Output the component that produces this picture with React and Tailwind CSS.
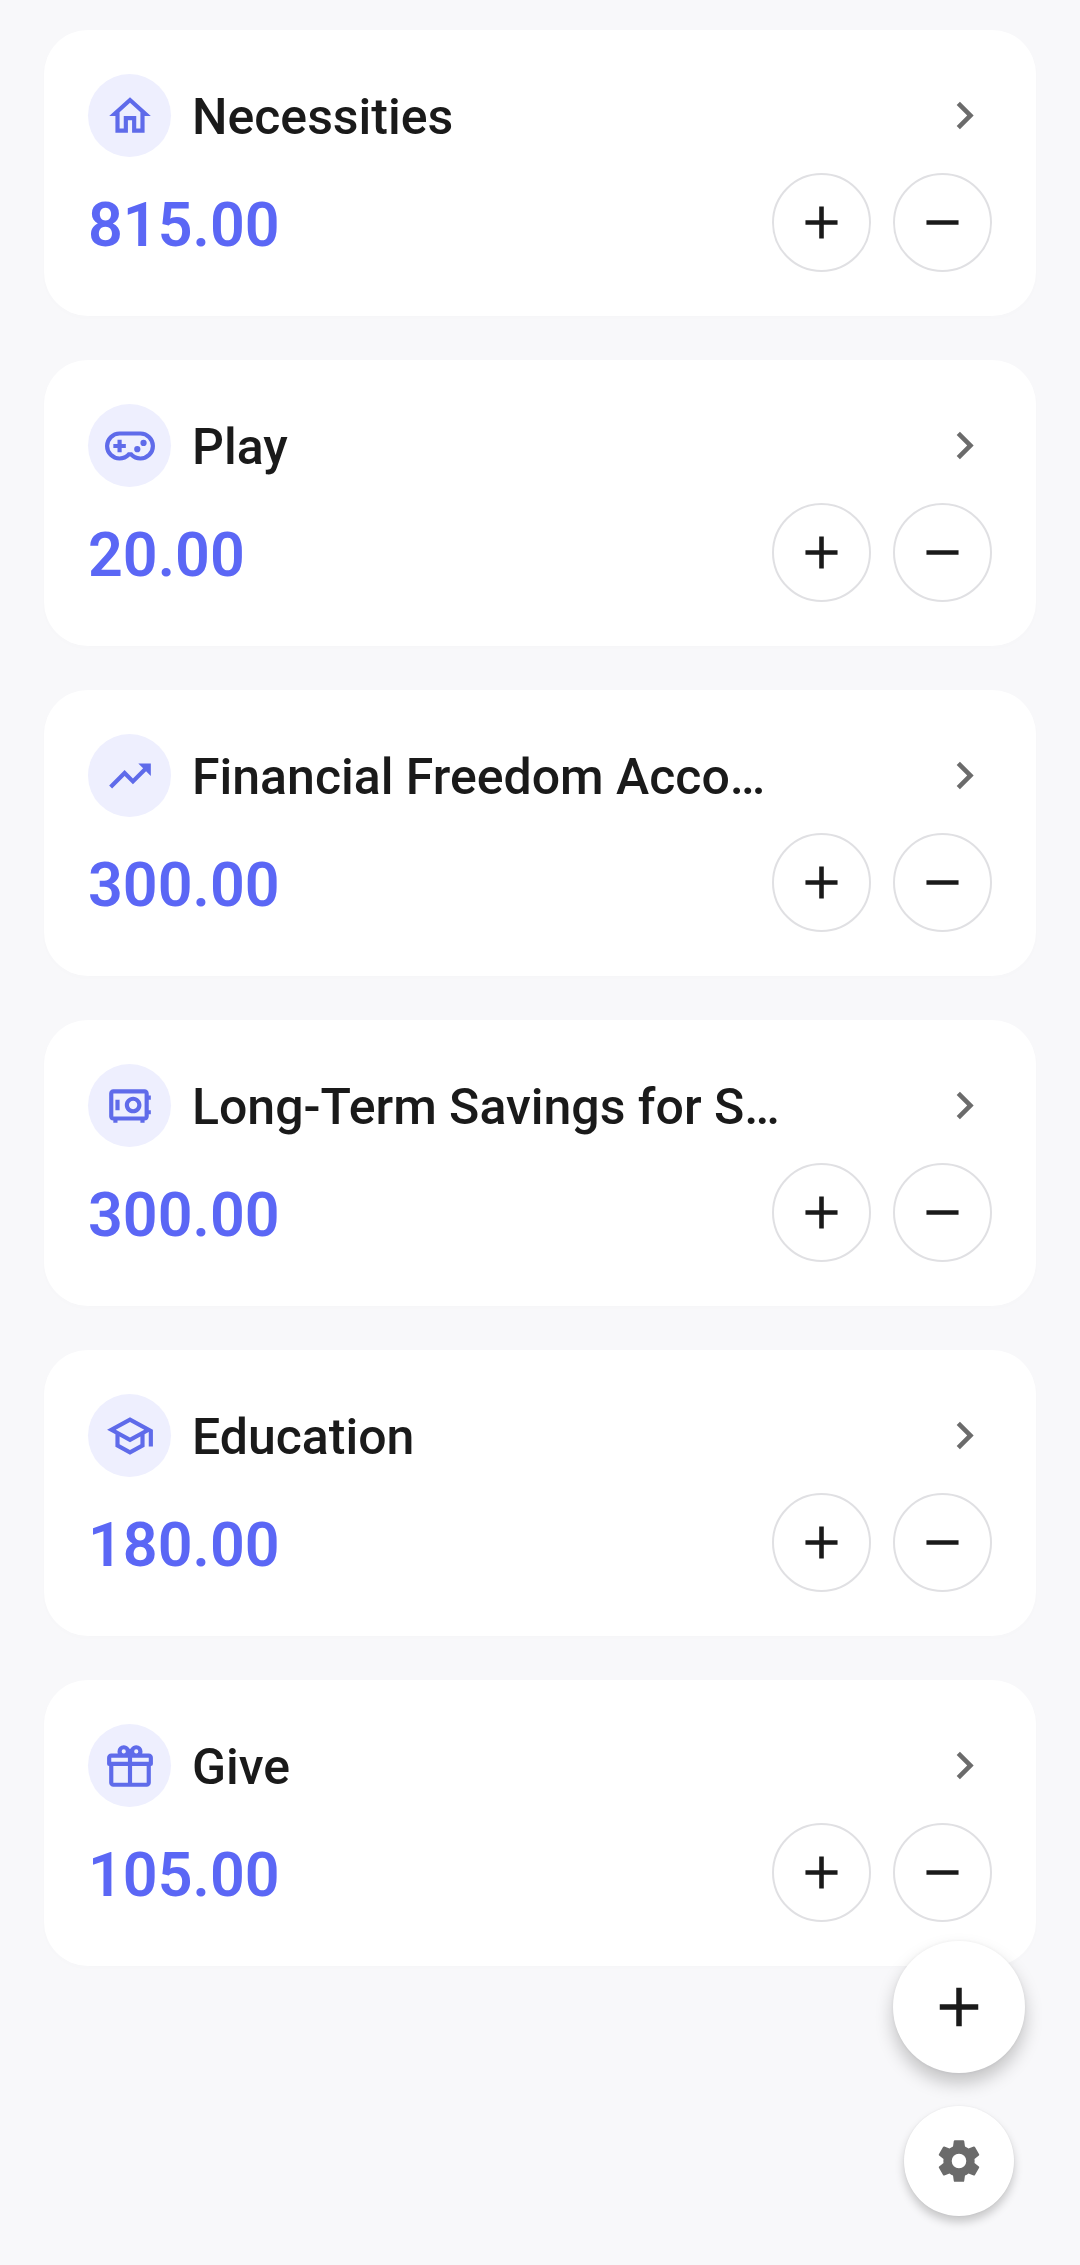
import { useState } from "react";

// 24x24 icon outlines
const icons = {
  home: "M12 5.69L17 10.19V18H15V12H9V18H7V10.19L12 5.69M12 3L2 12H5V20H11V14H13V20H19V12H22",
  controller:
    "M6,9H8V11H10V13H8V15H6V13H4V11H6V9M18.5,9A1.5,1.5 0 0,1 20,10.5A1.5,1.5 0 0,1 18.5,12A1.5,1.5 0 0,1 17,10.5A1.5,1.5 0 0,1 18.5,9M15.5,12A1.5,1.5 0 0,1 17,13.5A1.5,1.5 0 0,1 15.5,15A1.5,1.5 0 0,1 14,13.5A1.5,1.5 0 0,1 15.5,12M17,5A7,7 0 0,1 24,12A7,7 0 0,1 17,19C15.04,19 13.27,18.2 12,16.9C10.73,18.2 8.96,19 7,19A7,7 0 0,1 0,12A7,7 0 0,1 7,5H17M7,7A5,5 0 0,0 2,12A5,5 0 0,0 7,17C8.64,17 10.09,16.21 11,15H13C13.91,16.21 15.36,17 17,17A5,5 0 0,0 22,12A5,5 0 0,0 17,7H7Z",
  trending:
    "M16,6L18.29,8.29L13.41,13.17L9.41,9.17L2,16.59L3.41,18L9.41,12L13.41,16L19.71,9.71L22,12V6H16Z",
  safe: "M19 4H4C2.9 4 2 4.9 2 6V17C2 18.1 2.9 19 4 19V20H6V19H17V20H19V19C20.1 19 21 18.1 21 17V16H22V14H21V9H22V7H21V6C21 4.9 20.1 4 19 4M19 17H4V6H19V17M13.5 7.5C11.29 7.5 9.5 9.29 9.5 11.5S11.29 15.5 13.5 15.5 17.5 13.71 17.5 11.5 15.71 7.5 13.5 7.5M13.5 13.5C12.4 13.5 11.5 12.6 11.5 11.5S12.4 9.5 13.5 9.5 15.5 10.4 15.5 11.5 14.6 13.5 13.5 13.5M5 9H7V14H5V9Z",
  school:
    "M12 3L1 9L5 11.18V17.18L12 21L19 17.18V11.18L21 10.09V17H23V9L12 3M18.82 9L12 12.72L5.18 9L12 5.28L18.82 9M17 16L12 18.72L7 16V12.27L12 15L17 12.27V16Z",
  gift: "M22,12V20A2,2 0 0,1 20,22H4A2,2 0 0,1 2,20V12A1,1 0 0,1 1,11V8A2,2 0 0,1 3,6H6.17C6.06,5.69 6,5.35 6,5A3,3 0 0,1 9,2C10,2 10.88,2.5 11.43,3.24V3.23L12,4L12.57,3.23V3.24C13.12,2.5 14,2 15,2A3,3 0 0,1 18,5C18,5.35 17.94,5.69 17.83,6H21A2,2 0 0,1 23,8V11A1,1 0 0,1 22,12M4,20H11V12H4V20M20,20V12H13V20H20M9,4A1,1 0 0,0 8,5A1,1 0 0,0 9,6A1,1 0 0,0 10,5A1,1 0 0,0 9,4M15,4A1,1 0 0,0 14,5A1,1 0 0,0 15,6A1,1 0 0,0 16,5A1,1 0 0,0 15,4M3,8V10H11V8H3M13,8V10H21V8H13Z",
  chevron: "M8.59,16.58L13.17,12L8.59,7.41L10,6L16,12L10,18L8.59,16.58Z",
  plus: "M19,13H13V19H11V13H5V11H11V5H13V11H19V13Z",
  minus: "M19,13H5V11H19V13Z",
  cog: "M12,15.5A3.5,3.5 0 0,1 8.5,12A3.5,3.5 0 0,1 12,8.5A3.5,3.5 0 0,1 15.5,12A3.5,3.5 0 0,1 12,15.5M19.43,12.97C19.47,12.65 19.5,12.33 19.5,12C19.5,11.67 19.47,11.34 19.43,11L21.54,9.37C21.73,9.22 21.78,8.95 21.66,8.73L19.66,5.27C19.54,5.05 19.27,4.96 19.05,5.05L16.56,6.05C16.04,5.66 15.5,5.32 14.87,5.07L14.5,2.42C14.46,2.18 14.25,2 14,2H10C9.75,2 9.54,2.18 9.5,2.42L9.13,5.07C8.5,5.32 7.96,5.66 7.44,6.05L4.95,5.05C4.73,4.96 4.46,5.05 4.34,5.27L2.34,8.73C2.21,8.95 2.27,9.22 2.46,9.37L4.57,11C4.53,11.34 4.5,11.67 4.5,12C4.5,12.33 4.53,12.65 4.57,12.97L2.46,14.63C2.27,14.78 2.21,15.05 2.34,15.27L4.34,18.73C4.46,18.95 4.73,19.03 4.95,18.95L7.44,17.94C7.96,18.34 8.5,18.68 9.13,18.93L9.5,21.58C9.54,21.82 9.75,22 10,22H14C14.25,22 14.46,21.82 14.5,21.58L14.87,18.93C15.5,18.67 16.04,18.34 16.56,17.94L19.05,18.95C19.27,19.03 19.54,18.95 19.66,18.73L21.66,15.27C21.78,15.05 21.73,14.78 21.54,14.63L19.43,12.97Z",
};

const initialJars = [
  { name: "Necessities", icon: "home", amount: 815 },
  { name: "Play", icon: "controller", amount: 20 },
  { name: "Financial Freedom Account", icon: "trending", amount: 300 },
  { name: "Long-Term Savings for Spending", icon: "safe", amount: 300 },
  { name: "Education", icon: "school", amount: 180 },
  { name: "Give", icon: "gift", amount: 105 },
];

const Icon = ({ name, className }) => (
  <svg viewBox="0 0 24 24" fill="currentColor" className={className} aria-hidden="true">
    <path d={icons[name]} />
  </svg>
);

const RoundButton = ({ icon, label, onClick }) => (
  <button
    type="button"
    aria-label={label}
    onClick={onClick}
    className="flex size-[99px] items-center justify-center rounded-full border-2 border-[#e0e0e3] text-[#1a1a1a]"
  >
    <Icon name={icon} className="size-[55px] shrink-0" />
  </button>
);

const JarCard = ({ jar, onChange }) => (
  <li className="rounded-[44px] bg-white p-11 shadow-[0_2px_6px_rgba(0,0,0,0.01)]">
    {/* Title row */}
    <div className="flex items-center">
      <span className="mr-[21px] flex size-[83px] shrink-0 items-center justify-center rounded-full bg-[#eeeffe] text-[#5f6bea]">
        <Icon name={jar.icon} className="size-[50px]" />
      </span>
      <h2 className="min-w-0 flex-1 truncate pt-[3px] text-[50px] leading-[60px] font-medium text-[#1a1a1a]">
        {jar.name}
      </h2>
      <button
        type="button"
        aria-label={`Open ${jar.name}`}
        className="ml-[154px] shrink-0 text-[#6b6b6b]"
      >
        <Icon name="chevron" className="size-[55px]" />
      </button>
    </div>

    {/* Amount row */}
    <div className="mt-4 flex items-center justify-between">
      <p className="pt-[5px] text-[61px] leading-[72px] font-semibold text-[#5b67f5]">
        {jar.amount.toFixed(2)}
      </p>
      <div className="flex gap-[22px]">
        <RoundButton icon="plus" label={`Add to ${jar.name}`} onClick={() => onChange(1)} />
        <RoundButton icon="minus" label={`Take from ${jar.name}`} onClick={() => onChange(-1)} />
      </div>
    </div>
  </li>
);

const App = () => {
  const [jars, setJars] = useState(initialJars);

  const changeAmount = (index, delta) => {
    setJars((prev) =>
      prev.map((jar, i) =>
        i === index ? { ...jar, amount: Math.max(0, jar.amount + delta) } : jar
      )
    );
  };

  return (
    <main className="min-h-screen bg-[#f8f8fa] px-11 pt-[30px] pb-11 font-['Roboto',sans-serif]">
      <ul className="flex flex-col gap-11">
        {jars.map((jar, index) => (
          <JarCard
            key={jar.name}
            jar={jar}
            onChange={(delta) => changeAmount(index, delta)}
          />
        ))}
      </ul>

      {/* Floating actions */}
      <div className="fixed right-[55px] bottom-[49px] flex flex-col items-center gap-[33px]">
        <button
          type="button"
          aria-label="Add jar"
          className="flex size-[132px] items-center justify-center rounded-full bg-white text-[#1a1a1a] shadow-[0_10px_18px_rgba(0,0,0,0.22),0_0_4px_rgba(0,0,0,0.06)]"
        >
          <Icon name="plus" className="size-[66px]" />
        </button>
        <button
          type="button"
          aria-label="Settings"
          className="flex size-[110px] items-center justify-center rounded-full bg-white text-[#6b6b6b] shadow-[0_6px_10px_rgba(0,0,0,0.2),0_0_3px_rgba(0,0,0,0.06)]"
        >
          <Icon name="cog" className="size-[50px]" />
        </button>
      </div>
    </main>
  );
};

export default App;
